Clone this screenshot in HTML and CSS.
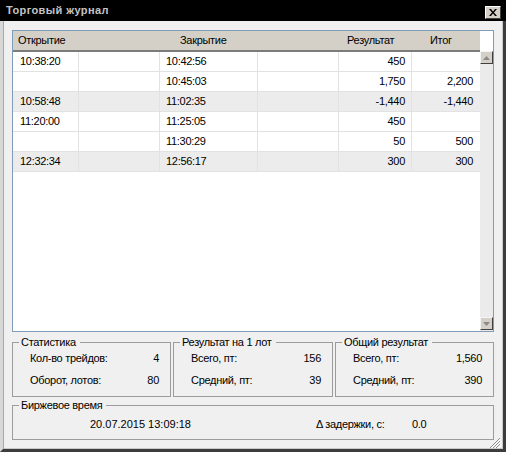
FILE: index.html
```html
<!DOCTYPE html>
<html lang="ru">
<head>
<meta charset="utf-8">
<title>Торговый журнал</title>
<link rel="stylesheet" href="styles.css">
</head>
<body>
<div class="window">
  <div class="titlebar">
    <span class="title">Торговый журнал</span>
    <div class="close">
      <svg width="8" height="7" viewBox="0 0 8 7"><path d="M0 0h2l2 2.5L6 0h2L5 3.5 8 7H6L4 4.5 2 7H0l3-3.5z" fill="#000"/></svg>
    </div>
  </div>
  <div class="frame">
    <div class="grid-box">
      <div class="table">
        <div class="thead">
          <span class="h1">Открытие</span>
          <span></span>
          <span class="h3">Закрытие</span>
          <span></span>
          <span class="h5">Результат</span>
          <span class="h6">Итог</span>
        </div>
        <div class="row"><span>10:38:20</span><span></span><span>10:42:56</span><span></span><span class="num">450</span><span class="num"></span></div>
        <div class="row"><span></span><span></span><span>10:45:03</span><span></span><span class="num">1,750</span><span class="num">2,200</span></div>
        <div class="row alt"><span>10:58:48</span><span></span><span>11:02:35</span><span></span><span class="num">-1,440</span><span class="num">-1,440</span></div>
        <div class="row"><span>11:20:00</span><span></span><span>11:25:05</span><span></span><span class="num">450</span><span class="num"></span></div>
        <div class="row"><span></span><span></span><span>11:30:29</span><span></span><span class="num">50</span><span class="num">500</span></div>
        <div class="row alt"><span>12:32:34</span><span></span><span>12:56:17</span><span></span><span class="num">300</span><span class="num">300</span></div>
      </div>
      <div class="scroll">
        <div class="scroll-top"></div>
        <div class="sbtn"><svg width="7" height="4" viewBox="0 0 7 4"><path d="M3.5 0L7 4H0z" fill="#8a8a8a"/></svg></div>
        <div class="track"></div>
        <div class="sbtn"><svg width="7" height="4" viewBox="0 0 7 4"><path d="M0 0h7L3.5 4z" fill="#8a8a8a"/></svg></div>
        <div class="scroll-end"></div>
      </div>
    </div>

    <div class="groups">
      <fieldset class="group">
        <legend>Статистика</legend>
        <div class="stat"><span>Кол-во трейдов:</span><span>4</span></div>
        <div class="stat"><span>Оборот, лотов:</span><span>80</span></div>
      </fieldset>
      <fieldset class="group">
        <legend>Результат на 1 лот</legend>
        <div class="stat"><span>Всего, пт:</span><span>156</span></div>
        <div class="stat"><span>Средний, пт:</span><span>39</span></div>
      </fieldset>
      <fieldset class="group">
        <legend>Общий результат</legend>
        <div class="stat"><span>Всего, пт:</span><span>1,560</span></div>
        <div class="stat"><span>Средний, пт:</span><span>390</span></div>
      </fieldset>
    </div>

    <fieldset class="group time">
      <legend>Биржевое время</legend>
      <div class="time-row">
        <span class="date">20.07.2015 13:09:18</span>
        <span class="delay-label">Δ задержки, с:</span>
        <span class="delay-value">0.0</span>
      </div>
    </fieldset>

    <svg class="grip" width="12" height="11" viewBox="0 0 12 11">
      <path d="M11 1L1 11M11 4L4 11M11 7L7 11" stroke="#8c8c8c" stroke-width="1"/>
      <path d="M12 2L2 12M12 5L5 12M12 8L8 12" stroke="#ffffff" stroke-width="1"/>
    </svg>
  </div>
</div>
</body>
</html>
```

FILE: styles.css
```css
* {
  box-sizing: border-box;
}

body {
  margin: 0;
  font-family: "Liberation Sans", Arial, sans-serif;
  font-size: 11px;
  letter-spacing: -0.3px;
  color: #000;
  background: #f0f0f0;
}

.window {
  width: 506px;
  height: 452px;
  display: flex;
  flex-direction: column;
  background: #f0f0f0;
}

.titlebar {
  height: 21px;
  flex: none;
  background: #000;
  display: flex;
  align-items: center;
  justify-content: space-between;
  padding: 0 5px 0 6px;
}

.title {
  color: #c4c4c4;
  font-weight: bold;
  font-size: 11px;
  letter-spacing: 0.4px;
  margin-top: -1px;
}

.close {
  width: 16px;
  height: 13px;
  margin-top: 4px;
  background: #d4d0c8;
  border-top: 1px solid #ffffff;
  border-left: 1px solid #ffffff;
  border-right: 1px solid #404040;
  border-bottom: 1px solid #404040;
  display: flex;
  align-items: center;
  justify-content: center;
}

.frame {
  flex: 1;
  position: relative;
  border-left: 3px solid #d8d8d8;
  border-right: 3px solid #3c3c3c;
  border-bottom: 3px solid #3c3c3c;
  box-shadow: inset 1px 0 0 #a8a8a8, inset -1px 0 0 #c8c8c8, inset 0 -1px 0 #c8c8c8;
  padding: 9px;
  display: flex;
  flex-direction: column;
}

.grid-box {
  height: 302px;
  flex: none;
  border: 1px solid #7f9db9;
  background: #fff;
  display: flex;
}

.table {
  flex: 1;
  display: flex;
  flex-direction: column;
}

.thead,
.row {
  display: grid;
  grid-template-columns: 66px 81px 98px 81px 73px 68px;
}

.thead {
  height: 21px;
  background: #d4d0c8;
  border-bottom: 2px solid #7c7c7c;
  line-height: 19px;
}

.h1 { padding-left: 5px; }
.h3 { padding-left: 20px; }
.h5 { padding-left: 8px; }
.h6 { padding-left: 18px; }

.row {
  height: 20px;
  border-bottom: 1px solid #e2e2e2;
}

.row.alt {
  background: #ececec;
}

.row > span {
  border-right: 1px solid #e2e2e2;
  padding: 0 6px;
  line-height: 19px;
  white-space: nowrap;
}

.row > span:first-child {
  padding-left: 7px;
}

.row > span:last-child {
  border-right: none;
  padding-right: 7px;
}

.row > .num {
  text-align: right;
}

.scroll {
  width: 13px;
  display: flex;
  flex-direction: column;
}

.scroll-top {
  height: 20px;
  background: #fff;
}

.sbtn {
  height: 13px;
  background: #d4d0c8;
  border-top: 1px solid #f4f4f4;
  border-left: 1px solid #f4f4f4;
  border-right: 1px solid #404040;
  border-bottom: 1px solid #404040;
  display: flex;
  align-items: center;
  justify-content: center;
}

.track {
  flex: 1;
  background: #ebebeb;
}

.scroll-end {
  height: 1px;
  background: #ebebeb;
}

.groups {
  margin-top: 4px;
  display: grid;
  grid-template-columns: 159px 160px 159px;
  gap: 2px;
}

.group {
  margin: 0;
  padding: 0 0 7px 0;
  border: 1px solid #9c9c9c;
  min-width: 0;
}

.group legend {
  margin-left: 6px;
  padding: 0 4px 0 2px;
  line-height: 13px;
  height: 13px;
}

.stat {
  height: 18px;
  line-height: 18px;
  display: flex;
  justify-content: space-between;
  padding: 0 11px 0 17px;
}

.stat + .stat {
  margin-top: 4px;
}

.time {
  margin-top: 2px;
  padding: 2px 0 5px 0;
}

.time-row {
  height: 20px;
  line-height: 20px;
  display: flex;
  padding-left: 77px;
}

.date {
  width: 226px;
  letter-spacing: 0;
}

.delay-label {
  width: 96px;
}

.grip {
  position: absolute;
  right: 2px;
  bottom: 1px;
}
```
